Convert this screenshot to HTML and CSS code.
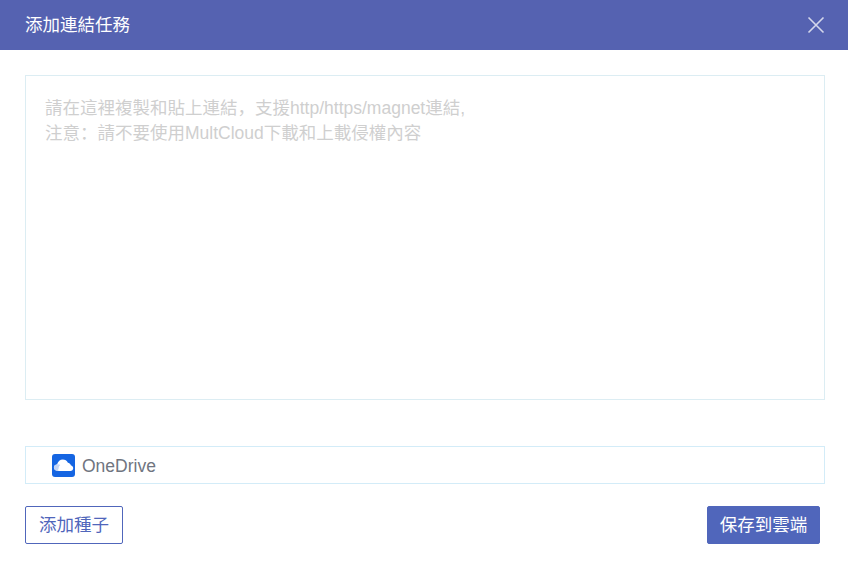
FILE: index.html
```html
<!DOCTYPE html>
<html lang="zh-Hant">
<head>
<meta charset="utf-8">
<title>添加連結任務</title>
<link rel="stylesheet" href="styles.css">
</head>
<body>
<div class="dialog">
  <header class="head">
    <span class="head-title">添加連結任務</span>
    <button class="close" type="button" aria-label="close">
      <svg width="18" height="18" viewBox="0 0 18 18"><path d="M1.5 1.5 16.5 16.5M16.5 1.5 1.5 16.5" stroke="#fff" stroke-opacity=".75" stroke-width="1.6" fill="none"/></svg>
    </button>
  </header>
  <main class="body">
    <textarea class="links" placeholder="請在這裡複製和貼上連結，支援http/https/magnet連結,&#10;注意：請不要使用MultCloud下載和上載侵權內容"></textarea>
    <div class="target">
      <svg class="cloud-icon" width="23" height="23" viewBox="0 0 23 23">
        <rect width="23" height="23" rx="3" fill="#1565e2"/>
        <path d="M6 17C3.4 17 1.9 15.4 1.9 13.6 1.9 11.7 3.4 10.5 5 10.5 5.9 7.6 8.2 5.6 10.8 5.6 13 5.6 14.9 6.8 15.9 8.8 17.4 9 18.6 10.1 19 11.5 20.4 11.8 21.2 12.9 21.2 14.3 21.2 15.9 20 17 18.5 17Z" fill="#fff"/>
        <path d="M6 17C3.4 17 1.9 15.4 1.9 13.6 1.9 11.7 3.4 10.5 5 10.5 5.9 10.2 7.2 10.3 8.3 11 7.2 12 6.6 13 6.7 14.4 6.1 15 6 16 6.6 17Z" fill="#c4d5f6"/>
      </svg>
      <span class="target-name">OneDrive</span>
    </div>
    <div class="actions">
      <button class="btn btn-outline" type="button">添加種子</button>
      <button class="btn btn-solid" type="button">保存到雲端</button>
    </div>
  </main>
</div>
</body>
</html>
```
FILE: styles.css
```css
* { box-sizing: border-box; }
html, body { margin: 0; height: 100%; background: #fff; }
body, button, textarea {
  font-family: "Liberation Sans", "Noto Sans CJK SC", sans-serif;
  font-size: 17.5px;
  font-feature-settings: "locl" 0;
}
.dialog { width: 848px; height: 585px; }
.head {
  height: 50px;
  background: #5562b1;
  color: #fff;
  display: flex;
  align-items: center;
  justify-content: space-between;
  padding: 0 23px 0 25px;
}
.head-title { padding-bottom: 3px; }
.close {
  border: 0; padding: 0; background: none;
  width: 18px; height: 18px; display: block;
}
.close svg { display: block; }
.body { padding: 25px 23px 0 25px; }
.links {
  display: block;
  width: 800px;
  height: 325px;
  border: 1px solid #dcedf3;
  padding: 20px 19px;
  line-height: 25px;
  resize: none;
  outline: none;
  color: #555;
}
.links::placeholder { color: #cfcfcf; opacity: 1; }
.target {
  margin-top: 46px;
  width: 800px;
  height: 38px;
  border: 1px solid #d3ecf8;
  display: flex;
  align-items: center;
  padding-left: 26px;
  gap: 7px;
}
.cloud-icon { display: block; flex: none; }
.target-name { color: #707580; padding-top: 3px; }
.actions {
  margin-top: 22px;
  width: 795px;
  display: flex;
  justify-content: space-between;
}
.btn {
  height: 38px;
  border-radius: 2px;
  padding: 0 0 3px;
  text-align: center;
}
.btn-outline {
  width: 98px;
  background: #fff;
  border: 1px solid #5066bb;
  color: #5066bb;
}
.btn-solid {
  width: 113px;
  background: #5066bb;
  border: 1px solid #5066bb;
  color: #fff;
}
```
